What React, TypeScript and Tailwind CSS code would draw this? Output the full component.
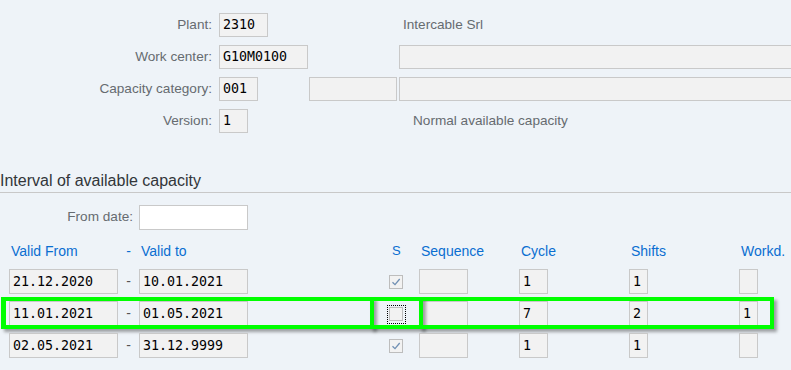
import React from 'react';

const sans = { fontFamily: '"Liberation Sans", Arial, sans-serif' };
const mono = { fontFamily: '"DejaVu Sans Mono", "Liberation Mono", monospace' };

function Field({ w, value, white, h = 'h-6' }: { w: string; value?: string; white?: boolean; h?: string }) {
  return (
    <div
      className={`${w} ${h} shrink-0 border border-[#c9c9c9] ${white ? 'bg-white' : 'bg-[#f2f2f2]'} pl-[3px] flex items-center text-[13.3px] text-black`}
      style={mono}
    >
      {value}
    </div>
  );
}

function Check({ checked }: { checked?: boolean }) {
  return (
    <div className="w-[14px] h-[14px] shrink-0 border border-[#bdbdbd] bg-[#f2f2f2] flex items-center justify-center">
      {checked && (
        <svg width="10" height="10" viewBox="0 0 10 10">
          <path d="M1.5 5.2 L4 7.6 L8.7 2" fill="none" stroke="#6f8fb3" strokeWidth="1.3" />
        </svg>
      )}
    </div>
  );
}

type Row = { from: string; to: string; s: boolean; cycle: string; shifts: string; workd: string };

const rows: Row[] = [
  { from: '21.12.2020', to: '10.01.2021', s: true, cycle: '1', shifts: '1', workd: '' },
  { from: '11.01.2021', to: '01.05.2021', s: false, cycle: '7', shifts: '2', workd: '1' },
  { from: '02.05.2021', to: '31.12.9999', s: true, cycle: '1', shifts: '1', workd: '' },
];

function TopRow({ label, children }: { label: string; children: React.ReactNode }) {
  return (
    <div className="flex items-center h-6">
      <div className="w-[212px] shrink-0 text-right text-[13.6px] text-[#666b70]">{label}</div>
      <div className="ml-[7px] flex items-center">{children}</div>
    </div>
  );
}

function DataRow({ row, focus }: { row: Row; focus?: boolean }) {
  return (
    <div className="relative flex items-center h-[25px]">
      <div className="w-[9px] shrink-0" />
      <Field w="w-[109px]" h="h-[25px]" value={row.from} />
      <div className="w-[21px] shrink-0 text-center text-[14px] text-[#555]">-</div>
      <Field w="w-[109px]" h="h-[25px]" value={row.to} />
      <div className="w-[141px] shrink-0" />
      {focus ? (
        <div className="relative">
          <Check checked={row.s} />
          <div className="absolute -left-[2px] -top-[2px] w-[19px] h-[19px] border border-dotted border-black" />
        </div>
      ) : (
        <Check checked={row.s} />
      )}
      <div className="w-[16px] shrink-0" />
      <Field w="w-[49px]" h="h-[25px]" />
      <div className="w-[51px] shrink-0" />
      <Field w="w-[29px]" h="h-[25px]" value={row.cycle} />
      <div className="w-[81px] shrink-0" />
      <Field w="w-[19px]" h="h-[25px]" value={row.shifts} />
      <div className="w-[91px] shrink-0" />
      <Field w="w-[19px]" h="h-[25px]" value={row.workd} />

      {focus && (
        <>
          <div className="absolute left-[1px] -top-[4px] w-[373px] h-[32px] border-4 border-l-[5px] border-[#00ff00] shadow-[3px_3px_3px_rgba(0,0,0,0.35)]" />
          <div className="absolute left-[370px] -top-[4px] w-[53px] h-[32px] border-4 border-[#00ff00] shadow-[3px_3px_3px_rgba(0,0,0,0.35)]" />
          <div className="absolute left-[419px] -top-[4px] w-[355px] h-[32px] border-4 border-[#00ff00] shadow-[3px_3px_3px_rgba(0,0,0,0.35)]" />
        </>
      )}
    </div>
  );
}

export default function App() {
  return (
    <div className="w-[791px] h-[370px] overflow-hidden bg-[#eef3f8]" style={sans}>
      {/* header data */}
      <div className="pt-[13px] flex flex-col gap-2">
        <TopRow label="Plant:">
          <Field w="w-[49px]" value="2310" />
          <span className="ml-[135px] text-[13.6px] text-[#666b70] whitespace-nowrap">Intercable Srl</span>
        </TopRow>
        <TopRow label="Work center:">
          <Field w="w-[89px]" value="G10M0100" />
          <div className="ml-[91px]">
            <Field w="w-[420px]" />
          </div>
        </TopRow>
        <TopRow label="Capacity category:">
          <Field w="w-[39px]" value="001" />
          <div className="ml-[51px]">
            <Field w="w-[88px]" />
          </div>
          <div className="ml-[2px]">
            <Field w="w-[420px]" />
          </div>
        </TopRow>
        <TopRow label="Version:">
          <Field w="w-[29px]" value="1" />
          <span className="ml-[165px] text-[13.6px] text-[#666b70] whitespace-nowrap">Normal available capacity</span>
        </TopRow>
      </div>

      {/* interval section */}
      <div className="mt-[32px] h-[28px] border-b border-[#c8c8c8] pt-[5px] flex items-center text-[16px] text-[#32363a]">
        Interval of available capacity
      </div>

      <div className="mt-[12px] flex items-center">
        <div className="w-[133px] text-right text-[13.6px] text-[#666b70]">From date:</div>
        <div className="ml-[6px]">
          <Field w="w-[109px]" h="h-[25px]" white />
        </div>
      </div>

      <div className="mt-[10px] h-[22px] flex items-center text-[14px] text-[#0a6ed1] whitespace-nowrap">
        <div className="w-[11px] shrink-0" />
        <div className="w-[107px] shrink-0">Valid From</div>
        <div className="w-[21px] shrink-0 text-center">-</div>
        <div className="ml-[2px] w-[107px] shrink-0">Valid to</div>
        <div className="w-[144px] shrink-0" />
        <div className="w-[29px] shrink-0 text-[13px]">S</div>
        <div className="w-[100px] shrink-0">Sequence</div>
        <div className="w-[110px] shrink-0">Cycle</div>
        <div className="w-[110px] shrink-0">Shifts</div>
        <div className="shrink-0">Workd.</div>
      </div>

      <div className="mt-[7px] flex flex-col gap-[7px]">
        {rows.map((r, i) => (
          <DataRow key={i} row={r} focus={i === 1} />
        ))}
      </div>
    </div>
  );
}
